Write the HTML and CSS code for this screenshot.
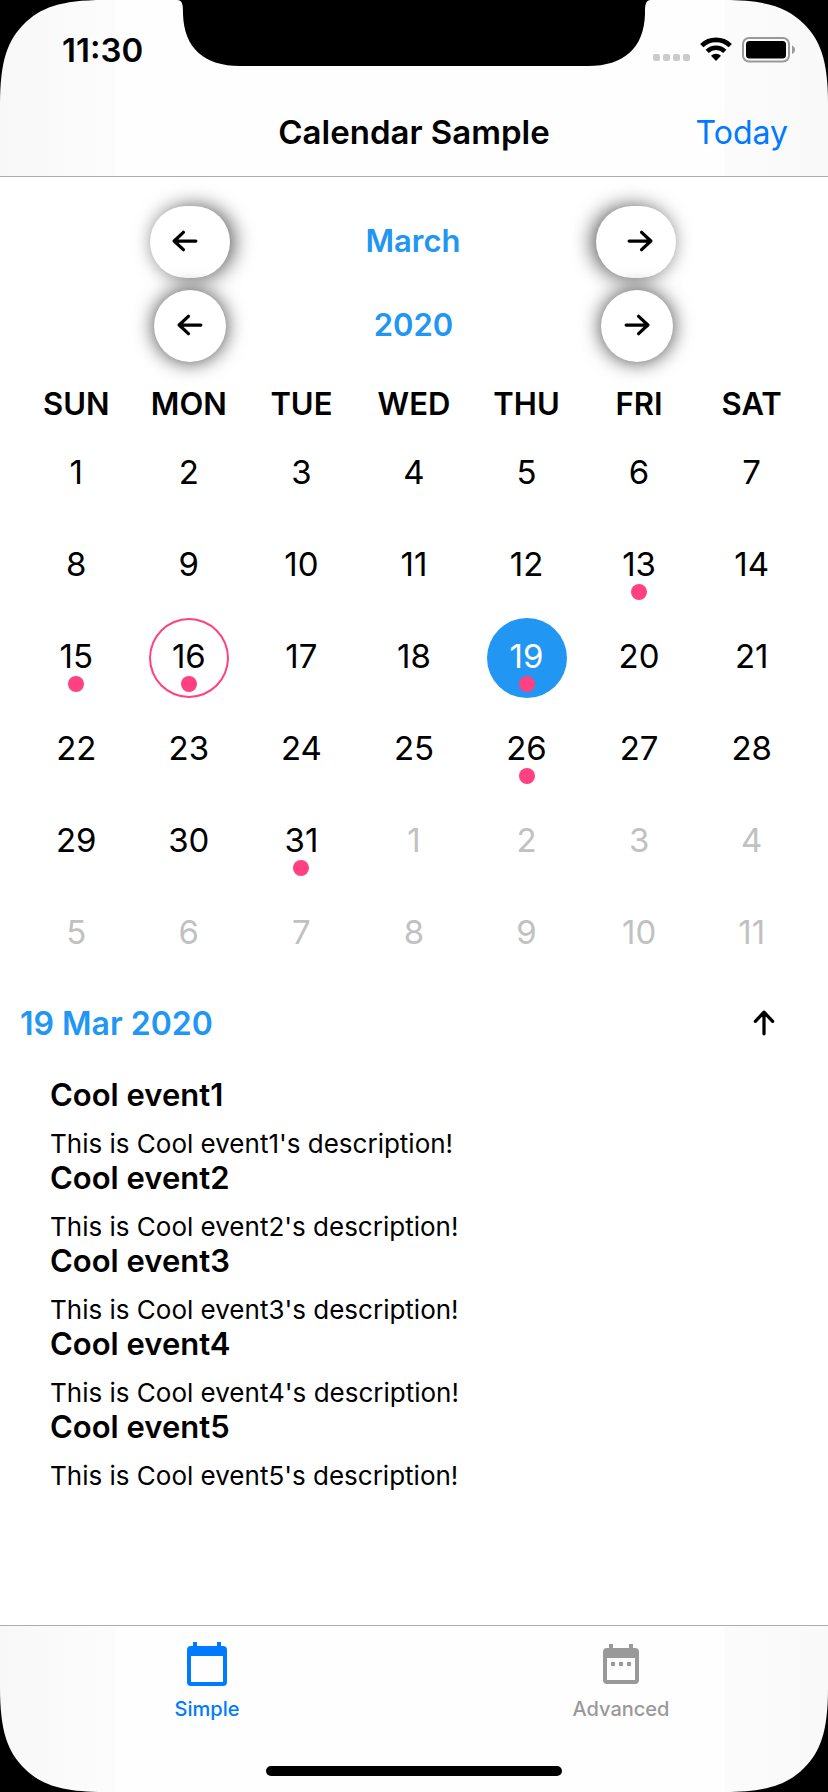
FILE: index.html
```html
<!DOCTYPE html>
<html lang="en">
<head>
<meta charset="utf-8">
<meta name="viewport" content="width=device-width, initial-scale=1">
<title>Calendar Sample</title>
<link rel="stylesheet" href="styles.css">
</head>
<body class="screen">
<header class="bar top">
  <div class="status">
    <span class="time">11:30</span>
    <span class="indicators">
      <svg width="37" height="24" viewBox="0 0 37 24" fill="#cbcbcb" aria-hidden="true"><rect y="17" width="7" height="7" rx="2"/><rect x="10" y="17" width="7" height="7" rx="2"/><rect x="20" y="17" width="7" height="7" rx="2"/><rect x="30" y="17" width="7" height="7" rx="2"/></svg>
      <svg width="32" height="24" viewBox="0 0 32 24" aria-hidden="true"><g fill="none" stroke="#000" stroke-width="4.6"><path d="M1.7 8.6A20.6 20.6 0 0 1 30.3 8.6"/><path d="M7.2 14.3A12.6 12.6 0 0 1 24.8 14.3"/></g><path d="M11 18.700A7.200 7.200 0 0 1 21 18.700L16 24Z"/></svg>
      <svg width="54" height="26" viewBox="0 0 54 26" aria-hidden="true"><rect x="1" y="1" width="46" height="23.500" rx="6" fill="none" stroke="#999" stroke-width="2"/><rect x="4" y="4" width="40" height="17.500" rx="3.500"/><path d="M50 8.500C54 10 54 15.500 50 17Z" fill="#999"/></svg>
    </span>
  </div>
  <div class="titlebar">
    <h1 class="title">Calendar Sample</h1>
    <button class="today" type="button">Today</button>
  </div>
</header>

<main class="content">
  <div class="pickers">
    <div class="picker month">
      <button class="round prev" type="button" aria-label="Previous month"><svg class="arrow" viewBox="0 0 24 24"><path d="M22 12H2M10.500 4L2 12L10.500 20"/></svg></button>
      <h2 class="period">March</h2>
      <button class="round next" type="button" aria-label="Next month"><svg class="arrow" viewBox="0 0 24 24"><path d="M2 12H22M13.500 4L22 12L13.500 20"/></svg></button>
    </div>
    <div class="picker year">
      <button class="round" type="button" aria-label="Previous year"><svg class="arrow" viewBox="0 0 24 24"><path d="M22 12H2M10.500 4L2 12L10.500 20"/></svg></button>
      <h2 class="period">2020</h2>
      <button class="round" type="button" aria-label="Next year"><svg class="arrow" viewBox="0 0 24 24"><path d="M2 12H22M13.500 4L22 12L13.500 20"/></svg></button>
    </div>
  </div>

  <table class="days">
    <thead><tr><th scope="col">SUN</th><th scope="col">MON</th><th scope="col">TUE</th><th scope="col">WED</th><th scope="col">THU</th><th scope="col">FRI</th><th scope="col">SAT</th></tr></thead>
    <tbody>
      <tr><td><button class="day" type="button">1</button></td><td><button class="day" type="button">2</button></td><td><button class="day" type="button">3</button></td><td><button class="day" type="button">4</button></td><td><button class="day" type="button">5</button></td><td><button class="day" type="button">6</button></td><td><button class="day" type="button">7</button></td></tr>
      <tr><td><button class="day" type="button">8</button></td><td><button class="day" type="button">9</button></td><td><button class="day" type="button">10</button></td><td><button class="day" type="button">11</button></td><td><button class="day" type="button">12</button></td><td><button class="day marked" type="button">13</button></td><td><button class="day" type="button">14</button></td></tr>
      <tr><td><button class="day marked" type="button">15</button></td><td><button class="day marked current" type="button">16</button></td><td><button class="day" type="button">17</button></td><td><button class="day" type="button">18</button></td><td><button class="day marked selected" type="button">19</button></td><td><button class="day" type="button">20</button></td><td><button class="day" type="button">21</button></td></tr>
      <tr><td><button class="day" type="button">22</button></td><td><button class="day" type="button">23</button></td><td><button class="day" type="button">24</button></td><td><button class="day" type="button">25</button></td><td><button class="day marked" type="button">26</button></td><td><button class="day" type="button">27</button></td><td><button class="day" type="button">28</button></td></tr>
      <tr><td><button class="day" type="button">29</button></td><td><button class="day" type="button">30</button></td><td><button class="day marked" type="button">31</button></td><td><button class="day other" type="button">1</button></td><td><button class="day other" type="button">2</button></td><td><button class="day other" type="button">3</button></td><td><button class="day other" type="button">4</button></td></tr>
      <tr><td><button class="day other" type="button">5</button></td><td><button class="day other" type="button">6</button></td><td><button class="day other" type="button">7</button></td><td><button class="day other" type="button">8</button></td><td><button class="day other" type="button">9</button></td><td><button class="day other" type="button">10</button></td><td><button class="day other" type="button">11</button></td></tr>
    </tbody>
  </table>

  <div class="agenda-head">
    <h2 class="period">19 Mar 2020</h2>
    <button class="collapse" type="button" aria-label="Collapse calendar"><svg class="arrow" viewBox="0 0 24 24"><path d="M12 22V2M4 10.500L12 2L20 10.500"/></svg></button>
  </div>
  <ul class="events">
    <li class="event"><h3 class="event-name">Cool event1</h3><p class="event-text">This is Cool event1's description!</p></li>
    <li class="event"><h3 class="event-name">Cool event2</h3><p class="event-text">This is Cool event2's description!</p></li>
    <li class="event"><h3 class="event-name">Cool event3</h3><p class="event-text">This is Cool event3's description!</p></li>
    <li class="event"><h3 class="event-name">Cool event4</h3><p class="event-text">This is Cool event4's description!</p></li>
    <li class="event"><h3 class="event-name">Cool event5</h3><p class="event-text">This is Cool event5's description!</p></li>
  </ul>
</main>

<nav class="bar bottom">
  <div class="tabs">
    <a class="tab active" href="#simple"><svg width="44" height="44" viewBox="0 0 44 44" aria-hidden="true"><path fill="currentColor" fill-rule="evenodd" d="M8 0H12V4H32V0H36V4H38A4 4 0 0 1 42 8V40A4 4 0 0 1 38 44H6A4 4 0 0 1 2 40V8A4 4 0 0 1 6 4H8ZM6 14V40H38V14Z"/></svg><span>Simple</span></a>
    <a class="tab" href="#advanced"><svg width="44" height="44" viewBox="0 0 44 44" aria-hidden="true"><path fill="currentColor" fill-rule="evenodd" d="M10 2H14V6H30V2H34V6H36A4 4 0 0 1 40 10V38A4 4 0 0 1 36 42H8A4 4 0 0 1 4 38V10A4 4 0 0 1 8 6H10ZM8 16V38H36V16ZM12 20H16V24H12ZM20 20H24V24H20ZM28 20H32V24H28Z"/></svg><span>Advanced</span></a>
  </div>
  <div class="home"></div>
</nav>

<svg class="notch" viewBox="0 0 474 66" aria-hidden="true"><path d="M0 0H474C468 0 468 6 468 14C467 48 447 66 411 66H63C27 66 7 48 6 14C6 6 6 0 0 0Z"/></svg>
<svg class="corner tl" viewBox="0 0 104 104" aria-hidden="true"><path d="M0 0H104C60 0 40 8 24 24C8 40 0 60 0 104Z"/></svg>
<svg class="corner tr" viewBox="0 0 104 104" aria-hidden="true"><path d="M0 0H104C60 0 40 8 24 24C8 40 0 60 0 104Z"/></svg>
<svg class="corner bl" viewBox="0 0 104 104" aria-hidden="true"><path d="M0 0H104C60 0 40 8 24 24C8 40 0 60 0 104Z"/></svg>
<svg class="corner br" viewBox="0 0 104 104" aria-hidden="true"><path d="M0 0H104C60 0 40 8 24 24C8 40 0 60 0 104Z"/></svg>
</body>
</html>
```
FILE: styles.css
```css
* {
  box-sizing: border-box;
}

.screen {
  position: relative;
  display: flex;
  flex-direction: column;
  min-height: 100vh;
  margin: 0;
  background: #fff;
  color: #000;
  font-family: Inter, "Liberation Sans", sans-serif;
}

button {
  padding: 0;
  border: 0;
  background: none;
  color: inherit;
  font: inherit;
  cursor: pointer;
}

h1, h2, h3, p, ul {
  margin: 0;
  padding: 0;
}

.bar {
  background: linear-gradient(90deg, #f8f8f8, #fcfcfc 115px, #fefefe 116px, #fefefe calc(100% - 104px), #fbfbfb calc(100% - 103px), #f9f9f9);
}

.top {
  border-bottom: 1px solid #acacac;
}

.status {
  display: flex;
  justify-content: space-between;
  align-items: center;
  height: 88px;
  padding: 12px 32px 0 62px;
}

.time {
  font-size: 33px;
  font-weight: 600;
}

.indicators {
  display: flex;
  gap: 10px;
}

.titlebar {
  display: grid;
  grid-template-columns: 1fr auto 1fr;
  align-items: center;
  height: 88px;
  padding: 0 40px;
}

.title {
  grid-column: 2;
  font-size: 33px;
  font-weight: 600;
}

.today {
  justify-self: end;
  color: #007aff;
  font-size: 32px;
}

.content {
  flex: 1;
  padding-top: 29px;
}

.pickers {
  display: grid;
  gap: 12px;
}

.picker {
  display: flex;
  justify-content: space-between;
  align-items: center;
  padding: 0 155px 0 154px;
}

.month {
  padding: 0 152px 0 150px;
}

.period {
  color: #2196f3;
  font-size: 32px;
  font-weight: 600;
}

.picker .period {
  padding-bottom: 4px;
  font-size: 31px;
}

.round {
  display: flex;
  justify-content: center;
  align-items: center;
  width: 72px;
  height: 72px;
  padding-bottom: 2px;
  border-radius: 36px;
  background: #fff;
  box-shadow: 0 0 20px rgba(0, 0, 0, 0.75);
}

.prev, .next {
  width: 80px;
}

.prev {
  padding-right: 10px;
  box-shadow: 4px 0 20px rgba(0, 0, 0, 0.65);
}

.next {
  padding-left: 8px;
  box-shadow: -4px 0 20px rgba(0, 0, 0, 0.65);
}

.arrow {
  display: block;
  width: 26px;
  height: 26px;
  fill: none;
  stroke: #000;
  stroke-width: 3;
  stroke-linecap: round;
  stroke-linejoin: round;
}

.days {
  width: calc(100% - 40px);
  margin: 16px 20px 0;
  border-collapse: collapse;
  table-layout: fixed;
}

.days th {
  height: 50px;
  padding: 0;
  font-size: 31px;
  font-weight: 600;
}

.days td {
  padding: 6px 0;
}

.day {
  position: relative;
  display: block;
  width: 80px;
  height: 80px;
  margin: 0 auto;
  padding-bottom: 4px;
  border-radius: 50%;
  font-size: 33px;
}

.marked::after {
  content: "";
  position: absolute;
  bottom: 6px;
  left: calc(50% - 8px);
  width: 16px;
  height: 16px;
  border-radius: 50%;
  background: #ff4081;
}

.current {
  box-shadow: inset 0 0 0 2px #ff4081;
}

.selected {
  background: #2196f3;
  color: #fff;
}

.other {
  color: #c1c1c1;
}

.agenda-head {
  display: flex;
  justify-content: space-between;
  align-items: center;
  height: 86px;
  padding: 0 51px 0 20px;
}

.events {
  padding: 10px 50px;
  list-style: none;
}

.event {
  display: grid;
  gap: 14px;
}

.event-name {
  font-size: 31px;
  font-weight: 600;
  line-height: 38px;
}

.event-text {
  font-size: 26px;
  line-height: 31px;
}

.bottom {
  display: flex;
  flex-direction: column;
  justify-content: space-between;
  height: 167px;
  padding: 16px 0;
  border-top: 1px solid #acacac;
}

.tabs {
  display: grid;
  grid-template-columns: 1fr 1fr;
}

.tab {
  display: flex;
  flex-direction: column;
  align-items: center;
  gap: 11px;
  color: #999;
  font-size: 20px;
  font-weight: 500;
  line-height: 24px;
  text-decoration: none;
}

.active {
  color: #007aff;
}

.home {
  align-self: center;
  width: 296px;
  height: 10px;
  border-radius: 5px;
  background: #000;
}

.notch {
  position: absolute;
  top: 0;
  left: calc(50% - 237px);
  width: 474px;
  height: 66px;
}

.corner {
  position: absolute;
  width: 104px;
  height: 104px;
  pointer-events: none;
}

.tl {
  top: 0;
  left: 0;
}

.tr {
  top: 0;
  right: 0;
  transform: scaleX(-1);
}

.bl {
  bottom: 0;
  left: 0;
  transform: scaleY(-1);
}

.br {
  right: 0;
  bottom: 0;
  transform: scale(-1);
}
```
